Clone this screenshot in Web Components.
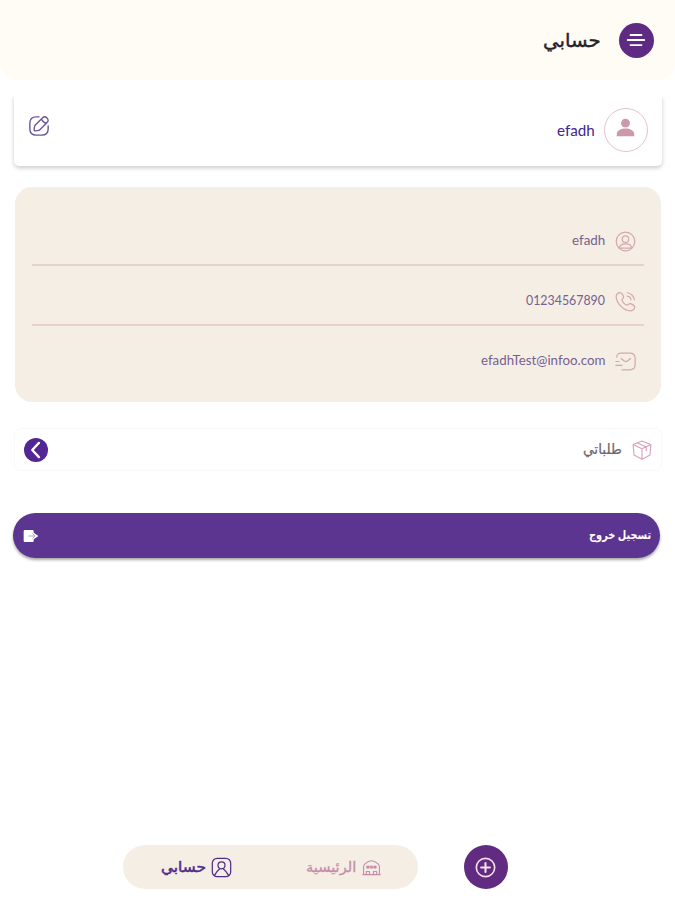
<!DOCTYPE html>
<html lang="ar" dir="rtl">
<head>
<meta charset="utf-8">
<title>حسابي</title>
<style>
	html,body{
		margin:0;
		height:100%;
		background:#fff;
		font-family:Lato,"DejaVu Sans",sans-serif;
	}
</style>
</head>
<body>
<account-page></account-page>
<script>
const ICONS={
	menu:'<path d="M6 6.500h12M3 12h18M6 17.500h12" stroke-width="2"/>',
	avatar:'<g fill="currentColor" stroke="none"><circle cx="12" cy="7" r="5"/><path d="M2 22v-2c0-9 20-9 20 0v2z"/></g>',
	edit:'<path d="M12 2H9C4 2 2 4 2 9v6c0 5 2 7 7 7h6c5 0 7-2 7-7v-3"/><path d="M16 3l-8 8c-1 1-1.600 5-1 6 1 .6 5 0 6-1l8-8c3-3-2-8-5-5zM14.800 4.200c.8 2.600 2.400 4.200 5 5"/>',
	person:'<circle cx="12" cy="12" r="10.600"/><circle cx="12" cy="9.300" r="3.700"/><path d="M5 19.600c.5-6.500 13.500-6.500 14 0M5 19.600h14"/>',
	phone:'<path d="M6 2C4 1 1.500 4 1.300 6c.2 8 8.500 16.600 16.400 16.700 2 0 5-2.200 4.800-4.200-.2-1.500-3-3.300-4.800-4-2-.6-2.600 2-4.200 1.600C11.400 15.600 8.300 12.400 8 10.500c0-1.600 2.300-2.200 1.800-4C9.300 4.700 7.600 2.400 6 2zM14 2c4 .3 7.700 4 8 8M14 5.800c2.200.2 4 2 4.200 4.200"/>',
	mail:'<path d="M2 7c0-3 2-4.500 5-4.500h10c4 0 6 2 6 6v7c0 4-2 6-6 6H8M7 8.500l3.600 3c1.200.9 2.400.9 3.600 0l3.600-3M1 16.500h7M1 12h3.500"/>',
	box:'<path d="M12 1.200l10.600 4.300-1 12.500L12 23l-9.600-5-1-12.500zM1.400 5.500L12 10.500l10.600-5M12 10.500V23M6.500 3.500l10.500 5v4.500"/>',
	chevron:'<path d="M15.500 3.500L7.500 12l8 8.500" stroke-width="2.800"/>',
	exit:'<path fill="currentColor" stroke="none" d="M3 3h11c1.500 0 2 1 2 2v2l7 5-7 5v2c0 1-.5 2-2 2H3c-1.500 0-2-1-2-2V5c0-1 .5-2 2-2z"/><path d="M9 12h9M14.500 8.500l3.500 3.500-3.500 3.500" stroke="#a99bc6"/>',
	user:'<rect x="1.500" y="1.500" width="21" height="21" rx="5.500"/><circle cx="12" cy="9.500" r="4"/><path d="M4 21c1.500-3 3-5 6-7.500M20 21c-1.500-3-3-5-6-7.500"/>',
	home:'<path d="M2 21V11c0-1.500.6-2.500 1.700-3.500C6.500 5 9 3.500 12 3.500s5.500 1.500 8.300 4C21.400 8.500 22 9.500 22 11v10M1 21h22M5.500 21v-4h4v4M14.500 21v-4h4v4"/><path d="M6 10h3v3H6zM10.500 10h3v3h-3zM15 10h3v3h-3z" fill="currentColor" stroke-width=".6"/>',
	plus:'<circle cx="12" cy="12" r="10.500" stroke-width="1.900"/><path d="M12 7v10M7 12h10" stroke-width="2.400"/>'
};

class AppIcon extends HTMLElement {
	constructor() {
		super();
		this._shadowRoot=this.attachShadow({mode:'open'});
	}

	connectedCallback() {
		const size=this.getAttribute('size')||20;
		this._shadowRoot.innerHTML=`
		<style>
			:host{display:block;flex:none;width:${size}px;height:${size}px;}
			svg{display:block;width:100%;height:100%;}
		</style>
		<svg viewBox="0 0 24 24" fill="none" stroke="currentColor" stroke-width="${this.getAttribute('stroke')||1.4}" stroke-linecap="round" stroke-linejoin="round">${ICONS[this.getAttribute('name')]}</svg>
		`;
	}
}

// Single line label, squeezed or stretched to a given width
class FitLabel extends HTMLElement {
	constructor() {
		super();
		this._shadowRoot=this.attachShadow({mode:'open'});
	}

	connectedCallback() {
		const width=Number(this.getAttribute('width'));
		this._shadowRoot.innerHTML=`
		<style>
			:host{display:block;flex:none;width:${width}px;white-space:nowrap;line-height:1.2;}
			span{display:inline-block;transform-origin:right center;}
		</style>
		<span><slot></slot></span>
		`;
		const span=this._shadowRoot.querySelector('span');
		span.style.transform=`scaleX(${width/span.offsetWidth})`;
	}
}

class AppHeader extends HTMLElement {
	constructor() {
		super();
		this.attachShadow({mode:'open'}).innerHTML=`
		<style>
			:host{
				display:flex;
				align-items:center;
				gap:18px;
				box-sizing:border-box;
				height:80px;
				padding:0 21.5px 0 0;
				background:#fffcf5;
				border-radius:0 0 16px 16px;
				color:#252327;
				font-size:19px;
				-webkit-text-stroke:.4px;
			}
			.menu{
				display:grid;
				place-items:center;
				width:35px;
				height:35px;
				border-radius:50%;
				background:#5e2b83;
				color:#fff;
			}
		</style>
		<div class="menu"><app-icon name="menu" size="22" stroke="2"></app-icon></div>
		<slot></slot>
		`;
	}
}

class ProfileCard extends HTMLElement {
	constructor() {
		super();
		this.attachShadow({mode:'open'}).innerHTML=`
		<style>
			:host{
				display:flex;
				align-items:center;
				box-sizing:border-box;
				height:70px;
				margin:16px 13px 0 14px;
				padding:0 14.500px 3px 14px;
				border-radius:0 0 5px 5px;
				background:#fff;
				box-shadow:0 2px 4px rgba(0,0,0,.21);
				clip-path:inset(0 -8px -10px -8px);
				color:#43248c;
				font-size:16px;
			}
			.avatar{
				display:grid;
				place-items:center;
				box-sizing:border-box;
				width:44px;
				height:44px;
				margin-left:9px;
				border:1px solid #dfc5cc;
				border-radius:50%;
				color:#cc98ac;
			}
			.avatar app-icon{margin-bottom:4px;}
			.edit{margin:0 auto 8px 0;color:#67549a;}
		</style>
		<div class="avatar"><app-icon name="avatar" size="21"></app-icon></div>
		<slot></slot>
		<app-icon class="edit" name="edit" size="22" stroke="1.5"></app-icon>
		`;
	}
}

class InfoPanel extends HTMLElement {
	constructor() {
		super();
		this.attachShadow({mode:'open'}).innerHTML=`
		<style>
			:host{
				display:block;
				box-sizing:border-box;
				height:215px;
				margin:21px 14px 0 15px;
				padding:19px 17px 0;
				border-radius:17px;
				background:#f5eee5;
			}
		</style>
		<slot></slot>
		`;
	}
}

class InfoRow extends HTMLElement {
	constructor() {
		super();
		this.attachShadow({mode:'open'}).innerHTML=`
		<style>
			:host{
				display:flex;
				align-items:flex-end;
				gap:10px;
				box-sizing:border-box;
				height:60px;
				padding:0 8px 12px;
				border-bottom:2px solid #e8d1cb;
				color:#76618f;
				font-size:13px;
			}
			:host(:last-child){border-color:transparent;}
			app-icon{color:#d4a8ae;}
			slot{display:block;padding-bottom:3px;}
		</style>
		<app-icon name="${this.getAttribute('icon')}" size="21"></app-icon>
		<slot></slot>
		`;
	}
}

class OrdersLink extends HTMLElement {
	constructor() {
		super();
		this.attachShadow({mode:'open'}).innerHTML=`
		<style>
			:host{
				display:flex;
				align-items:center;
				gap:10px;
				box-sizing:border-box;
				height:43px;
				margin:26px 13px 0 14px;
				padding:0 9px;
				border:1px solid #faf9f7;
				border-radius:7px;
				color:#6b666d;
				font-size:14px;
				-webkit-text-stroke:.2px;
			}
			.box{color:#d5a5bd;}
			.go{
				display:grid;
				place-items:center;
				width:24px;
				height:24px;
				margin-right:auto;
				border-radius:50%;
				background:#522794;
				color:#fff;
			}
		</style>
		<app-icon class="box" name="box" size="20"></app-icon>
		<slot></slot>
		<div class="go"><app-icon name="chevron" size="20"></app-icon></div>
		`;
	}
}

class LogoutButton extends HTMLElement {
	constructor() {
		super();
		this.attachShadow({mode:'open'}).innerHTML=`
		<style>
			:host{
				display:flex;
				align-items:center;
				justify-content:space-between;
				box-sizing:border-box;
				height:45px;
				margin:42px 15px 0 13px;
				padding:0 9px 0 10px;
				border-radius:23px;
				background:#5c3591;
				box-shadow:0 2px 3px rgba(0,0,0,.35);
				color:#fff;
				font-size:12px;
				font-weight:bold;
			}
		</style>
		<slot></slot>
		<app-icon name="exit" size="16"></app-icon>
		`;
	}
}

class BottomNav extends HTMLElement {
	constructor() {
		super();
		this.attachShadow({mode:'open'}).innerHTML=`
		<style>
			:host{
				display:flex;
				align-items:center;
				gap:46px;
				margin:auto 167.500px 11px 0;
			}
			.add{
				display:grid;
				place-items:center;
				width:44px;
				height:44px;
				border-radius:50%;
				background:#602b80;
				color:#f5dfea;
			}
			nav{
				display:flex;
				align-items:center;
				justify-content:space-between;
				box-sizing:border-box;
				width:295px;
				height:44px;
				padding:0 37px 0 38px;
				border-radius:22px;
				background:#f5eee5;
			}
		</style>
		<div class="add"><app-icon name="plus" size="21"></app-icon></div>
		<nav><slot></slot></nav>
		`;
	}
}

class NavItem extends HTMLElement {
	constructor() {
		super();
		this.attachShadow({mode:'open'}).innerHTML=`
		<style>
			:host{display:flex;align-items:center;gap:5px;color:#c78bab;font-size:14px;-webkit-text-stroke:.3px;}
			:host([active]){color:#4f2d88;-webkit-text-stroke:.5px;}
		</style>
		<app-icon name="${this.getAttribute('icon')}" size="${this.getAttribute('size')}"></app-icon>
		<slot></slot>
		`;
	}
}

class AccountPage extends HTMLElement {
	constructor() {
		super();
		this.attachShadow({mode:'open'}).innerHTML=`
		<style>
			:host{display:flex;flex-direction:column;height:100vh;overflow:hidden;}
		</style>
		<app-header><fit-label width="58">حسابي</fit-label></app-header>
		<profile-card><fit-label width="38">efadh</fit-label></profile-card>
		<info-panel>
			<info-row icon="person"><fit-label width="33">efadh</fit-label></info-row>
			<info-row icon="phone"><fit-label width="79">01234567890</fit-label></info-row>
			<info-row icon="mail"><fit-label width="124">efadhTest@infoo.com</fit-label></info-row>
		</info-panel>
		<orders-link><fit-label width="39">طلباتي</fit-label></orders-link>
		<logout-button><fit-label width="62">تسجيل خروج</fit-label></logout-button>
		<bottom-nav>
			<nav-item icon="home" size="19"><fit-label width="50">الرئيسية</fit-label></nav-item>
			<nav-item icon="user" size="21" active><fit-label width="45">حسابي</fit-label></nav-item>
		</bottom-nav>
		`;
	}
}

customElements.define('app-icon', AppIcon);
customElements.define('app-header', AppHeader);
customElements.define('profile-card', ProfileCard);
customElements.define('info-panel', InfoPanel);
customElements.define('info-row', InfoRow);
customElements.define('orders-link', OrdersLink);
customElements.define('logout-button', LogoutButton);
customElements.define('bottom-nav', BottomNav);
customElements.define('nav-item', NavItem);
customElements.define('account-page', AccountPage);
// last, so that labels are measured with the styles of their parents applied
customElements.define('fit-label', FitLabel);
</script>
</body>
</html>
